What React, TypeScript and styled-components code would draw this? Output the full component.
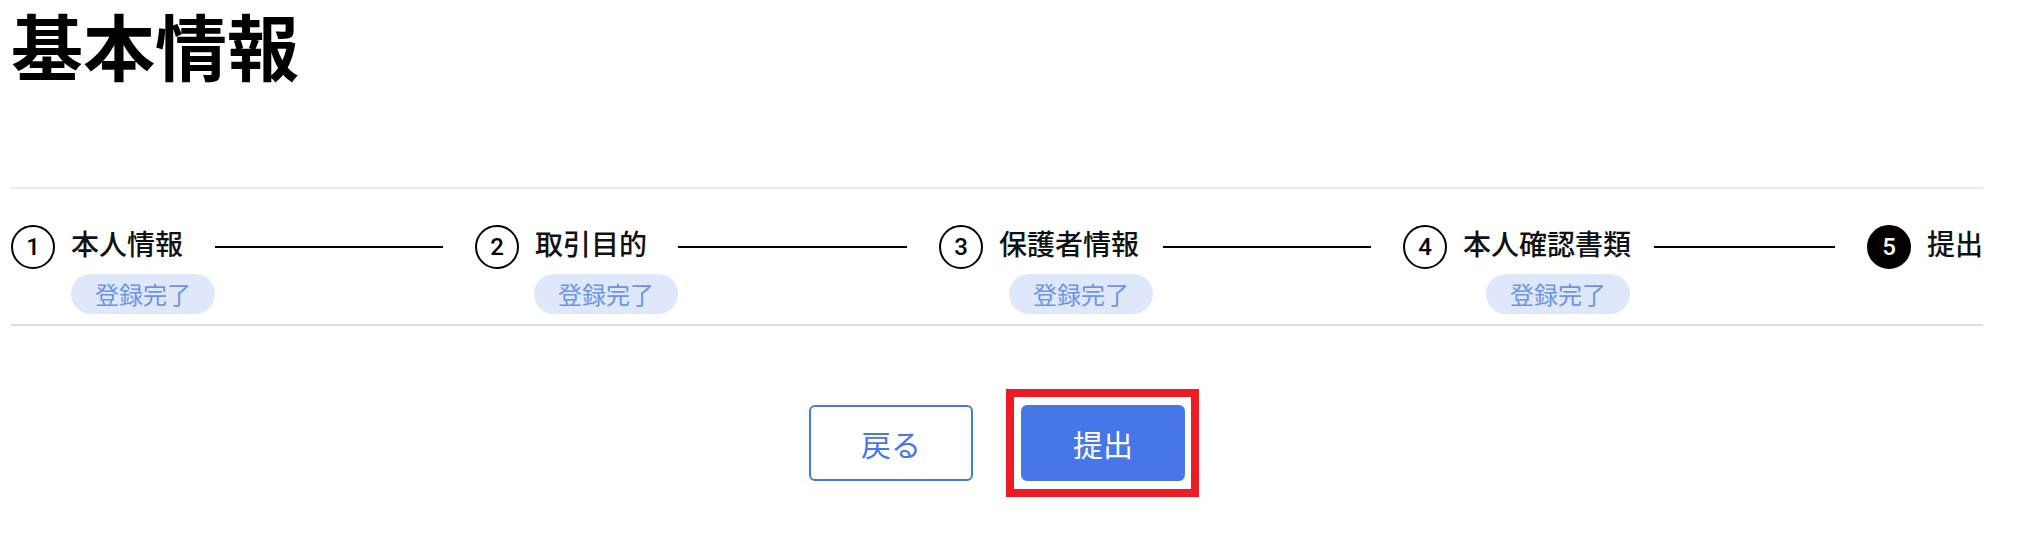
import React from "react";
import styled, { createGlobalStyle } from "styled-components";

const GlobalStyle = createGlobalStyle`
  html, body {
    margin: 0;
    padding: 0;
    background: #ffffff;
  }
  body {
    font-family: "Noto Sans CJK JP", "Noto Sans", sans-serif;
    color: #111111;
  }
`;

const Page = styled.div`
  box-sizing: border-box;
  width: 1972px;
  min-height: 533px;
  margin-left: 11px;
  padding-top: 1px;
`;

const Title = styled.h1`
  margin: 0 0 100px 0;
  font-size: 72px;
  line-height: 86px;
  font-weight: 700;
  color: #000000;
`;

const StepperSection = styled.section`
  border-top: 2px solid #ebebeb;
  border-bottom: 2px solid #dcdcdc;
  padding: 36px 0 10px 0;
  display: flex;
  align-items: flex-start;
`;

const Step = styled.div<{ $last?: boolean }>`
  flex: ${(p) => (p.$last ? "0 0 auto" : "1 1 0")};
  min-width: 0;
  display: flex;
  flex-direction: column;
`;

const StepHead = styled.div`
  display: flex;
  align-items: center;
`;

const Circle = styled.div<{ $active?: boolean }>`
  box-sizing: border-box;
  width: 44px;
  height: 44px;
  flex: 0 0 44px;
  border-radius: 50%;
  border: 2px solid #000000;
  background: ${(p) => (p.$active ? "#000000" : "#ffffff")};
  color: ${(p) => (p.$active ? "#ffffff" : "#000000")};
  display: flex;
  align-items: center;
  justify-content: center;
  font-family: Roboto, "Liberation Sans", sans-serif;
  font-size: 24px;
  font-weight: 500;
  line-height: 1;
`;

const StepLabel = styled.span`
  margin-left: 16px;
  margin-bottom: 8px;
  font-size: 28px;
  line-height: 36px;
  font-weight: 500;
  white-space: nowrap;
  color: #111111;
`;

const Connector = styled.div<{ $gap: number }>`
  flex: 1 1 auto;
  height: 2px;
  background: #000000;
  margin: 0 32px 0 ${(p) => p.$gap}px;
`;

const Badge = styled.span<{ $offset: number }>`
  align-self: flex-start;
  margin-top: 5px;
  margin-left: ${(p) => p.$offset}px;
  height: 40px;
  padding: 0 24px;
  border-radius: 20px;
  background: #dfe7fa;
  color: #6b95e8;
  font-size: 24px;
  line-height: 40px;
  white-space: nowrap;
`;

const Actions = styled.div`
  display: flex;
  justify-content: center;
  gap: 48px;
  margin-top: 79px;
`;

const Button = styled.button<{ $primary?: boolean }>`
  box-sizing: border-box;
  width: 164px;
  height: 76px;
  border-radius: 6px;
  border: 2px solid #4776e6;
  background: ${(p) => (p.$primary ? "#4776e6" : "#ffffff")};
  color: ${(p) => (p.$primary ? "#ffffff" : "#4776e6")};
  font-family: "Noto Sans CJK JP", sans-serif;
  font-size: 30px;
  font-weight: 400;
  cursor: pointer;
  padding: 0;
`;

const Highlight = styled.div`
  position: relative;
  display: flex;
  &::after {
    content: "";
    position: absolute;
    inset: -16px -14px -16px -15px;
    border: 8px solid #ed1c24;
    pointer-events: none;
  }
`;

const steps = [
  { n: 1, label: "本人情報", done: true, badgeOffset: 60, gap: 32 },
  { n: 2, label: "取引目的", done: true, badgeOffset: 59, gap: 31 },
  { n: 3, label: "保護者情報", done: true, badgeOffset: 70, gap: 24 },
  { n: 4, label: "本人確認書類", done: true, badgeOffset: 83, gap: 23 },
  { n: 5, label: "提出", done: false, badgeOffset: 60, gap: 0 },
];

export default function App() {
  return (
    <>
      <GlobalStyle />
      <Page>
        <Title>基本情報</Title>
        <StepperSection>
          {steps.map((s, i) => {
            const last = i === steps.length - 1;
            return (
              <Step key={s.n} $last={last}>
                <StepHead>
                  <Circle $active={last}>{s.n}</Circle>
                  <StepLabel>{s.label}</StepLabel>
                  {!last && <Connector $gap={s.gap} />}
                </StepHead>
                {s.done && <Badge $offset={s.badgeOffset}>登録完了</Badge>}
              </Step>
            );
          })}
        </StepperSection>
        <Actions>
          <Button type="button">戻る</Button>
          <Highlight>
            <Button type="button" $primary>
              提出
            </Button>
          </Highlight>
        </Actions>
      </Page>
    </>
  );
}
